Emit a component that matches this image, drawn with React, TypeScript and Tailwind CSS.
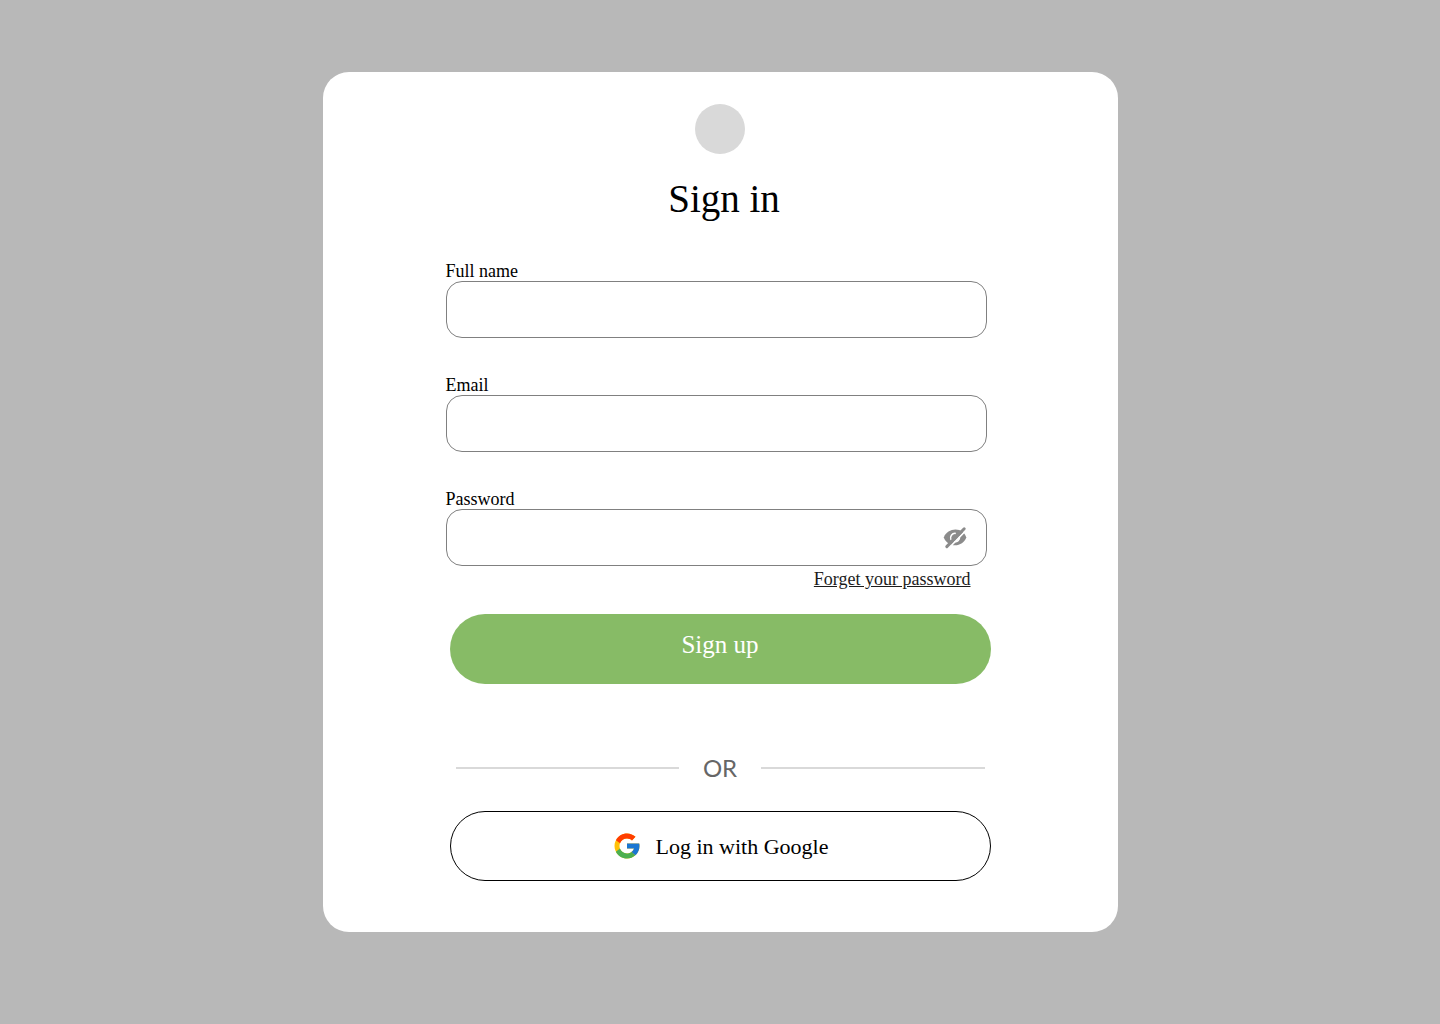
import { useState } from 'react'
import type { ReactNode } from 'react'
import { FcGoogle } from 'react-icons/fc'

function HiddenEyeIcon() {
  return (
    <svg viewBox="0 1 24 24" className="size-6" fill="none" aria-hidden="true">
      <path
        d="M0.800 12.500C2.600 7.400 7.600 4.600 12.500 4.600C17.800 4.600 21.600 7.600 23.300 12.500C21.600 17.400 17 20.300 12 20.300C6.800 20.300 2.600 17.400 0.800 12.500Z"
        fill="#8b8b8b"
      />
      <path d="M8 15A4.600 4.600 0 0 1 12.800 8.400" stroke="#fff" strokeWidth="1.500" />
      <path d="M16.400 11.400A4.400 4.400 0 0 1 10.800 16.600" stroke="#fff" strokeWidth="1.500" />
      <path d="M6 22.800L23.200 5.200" stroke="#fff" strokeWidth="1.700" />
      <path d="M3.800 21.600L21.200 3.800" stroke="#8b8b8b" strokeWidth="3" strokeLinecap="round" />
    </svg>
  )
}

type FieldProps = {
  id: string
  label: string
  type: string
  autoComplete: string
  children?: ReactNode
}

function Field({ id, label, type, autoComplete, children }: FieldProps) {
  return (
    <div className="flex flex-col">
      <label htmlFor={id} className="text-[18px] leading-5">
        {label}
      </label>
      <div className="relative">
        <input
          id={id}
          name={id}
          type={type}
          autoComplete={autoComplete}
          className="block h-[57px] w-full rounded-2xl border border-[#808080] bg-white px-4 text-[18px]"
        />
        {children}
      </div>
    </div>
  )
}

export default function App() {
  const [visible, setVisible] = useState(false)

  return (
    <main className="min-h-screen bg-[#b8b8b8] py-[72px] font-['Liberation_Serif',serif] text-black">
      <div className="mx-auto flex w-full max-w-[795px] flex-col items-center rounded-[26px] bg-white px-6 pt-8 pb-[51px]">
        <div className="size-[50px] rounded-full bg-[#d9d9d9]" />
        <h1 className="mt-5 pl-2 text-[39px] leading-[50px]">Sign in</h1>

        <form className="mt-[37px] w-full max-w-[549px]" onSubmit={(e) => e.preventDefault()}>
          <div className="mr-2 flex flex-col gap-[37px]">
            <Field id="name" label="Full name" type="text" autoComplete="name" />
            <Field id="email" label="Email" type="email" autoComplete="email" />
            <Field
              id="password"
              label="Password"
              type={visible ? 'text' : 'password'}
              autoComplete="current-password"
            >
              <button
                type="button"
                aria-label="Toggle password visibility"
                aria-pressed={visible}
                onClick={() => setVisible(!visible)}
                className="absolute inset-y-0 right-5 flex items-center"
              >
                <HiddenEyeIcon />
              </button>
            </Field>
          </div>
          <div className="mr-6 flex justify-end pt-[3px]">
            <a href="#forgot" className="text-[18px] leading-5 text-[#1c1c1c] underline">
              Forget your password
            </a>
          </div>

          <div className="mx-1 mt-[25px]">
            <button
              type="submit"
              className="flex h-[70px] w-full items-center justify-center rounded-full bg-[#87bb66] pb-2 text-[25px] text-white"
            >
              Sign up
            </button>
            <div className="mt-[68px] flex items-center gap-6 px-1.5">
              <div className="h-0.5 flex-1 bg-[#d9d9d9]" />
              <span className="font-['Lato',sans-serif] text-2xl text-[#666666]">OR</span>
              <div className="h-0.5 flex-1 bg-[#d9d9d9]" />
            </div>
            <button
              type="button"
              className="mt-[27px] flex h-[70px] w-full items-center justify-center gap-3.5 rounded-full border border-black bg-white text-[22px]"
            >
              <FcGoogle className="size-[30px]" aria-hidden="true" />
              Log in with Google
            </button>
          </div>
        </form>
      </div>
    </main>
  )
}
